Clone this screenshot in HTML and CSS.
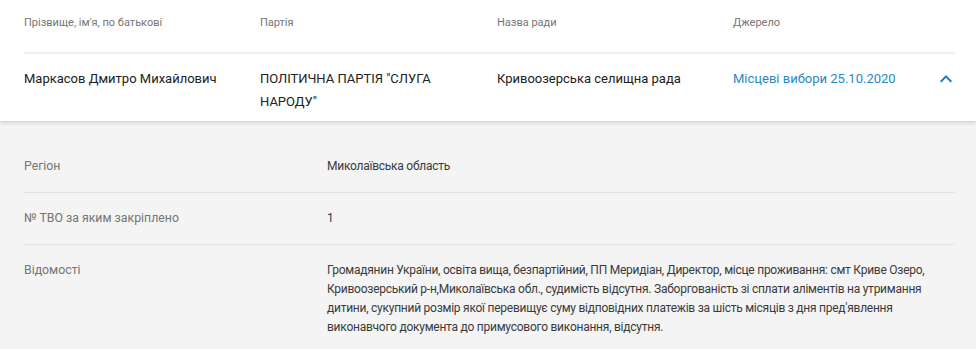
FILE: index.html
```html
<!DOCTYPE html>
<html>
<head>
    <title>Депутати</title>
    <meta charset="utf-8">
    <link rel="stylesheet" href="styles.css">
</head>
<body>
    <div class="table">
        <div class="row head">
            <div class="cell">Прізвище, ім'я, по батькові</div>
            <div class="cell">Партія</div>
            <div class="cell">Назва ради</div>
            <div class="cell">Джерело</div>
        </div>
        <div class="row main">
            <div class="cell">Маркасов Дмитро Михайлович</div>
            <div class="cell">ПОЛІТИЧНА ПАРТІЯ "СЛУГА НАРОДУ"</div>
            <div class="cell">Кривоозерська селищна рада</div>
            <div class="cell source">
                <a href="#">Місцеві вибори 25.10.2020</a>
                <span class="toggle">
                    <svg width="12" height="8" viewBox="0 0 12 8"><path d="M1.4 7.4L6 2.8l4.6 4.6L12 6 6 0 0 6z" fill="#1b7db8"/></svg>
                </span>
            </div>
        </div>
    </div>

    <div class="details">
        <div class="detail-row">
            <div class="label">Регіон</div>
            <div class="value">Миколаївська область</div>
        </div>
        <div class="detail-row">
            <div class="label">№ ТВО за яким закріплено</div>
            <div class="value">1</div>
        </div>
        <div class="detail-row">
            <div class="label">Відомості</div>
            <div class="value">Громадянин України, освіта вища, безпартійний, ПП Меридіан, Директор, місце проживання: смт Криве Озеро, Кривоозерський р-н,Миколаївська обл., судимість відсутня. Заборгованість зі сплати аліментів на утримання дитини, сукупний розмір якої перевищує суму відповідних платежів за шість місяців з дня пред'явлення виконавчого документа до примусового виконання, відсутня.</div>
        </div>
    </div>
</body>
</html>
```

FILE: styles.css
```css
body {
    margin: 0;
    font-family: Roboto, "Liberation Sans", sans-serif;
    background-color: #f4f4f4;
    color: #212121;
}
.table {
    background-color: white;
    padding: 0 21px 0 24px;
    box-shadow: 0 2px 4px rgba(0,0,0,0.14);
    position: relative;
}
.row {
    display: grid;
    grid-template-columns: 236px 237px 236px 1fr;
}
.head {
    height: 50px;
    align-items: center;
    font-size: 11px;
    color: #757575;
    border-bottom: 2px solid #eeeeee;
    padding-bottom: 2px;
}
.head .cell {
    margin-top: -6px;
}
.main {
    font-size: 13px;
    line-height: 23px;
    padding: 13px 0 8px;
}
.main .cell {
    padding-right: 24px;
}
.source {
    display: flex;
    justify-content: space-between;
    align-items: flex-start;
    padding-right: 0 !important;
}
.source a {
    color: #2a87c3;
    text-decoration: none;
}
.toggle {
    display: flex;
    align-items: center;
    justify-content: center;
    width: 26px;
    height: 23px;
    margin-right: -4px;
}
.details {
    padding: 20px 21px 0 24px;
}
.detail-row {
    display: grid;
    grid-template-columns: 303px 1fr;
    font-size: 12px;
    letter-spacing: -0.25px;
    line-height: 19px;
    padding: 16px 0;
    border-bottom: 1px solid #e2e2e2;
}
.detail-row:last-child {
    padding-bottom: 12px;
}
.label {
    color: #757575;
    font-size: 12.3px;
    letter-spacing: 0;
}
.value {
    color: #3a3a3a;
}
```
